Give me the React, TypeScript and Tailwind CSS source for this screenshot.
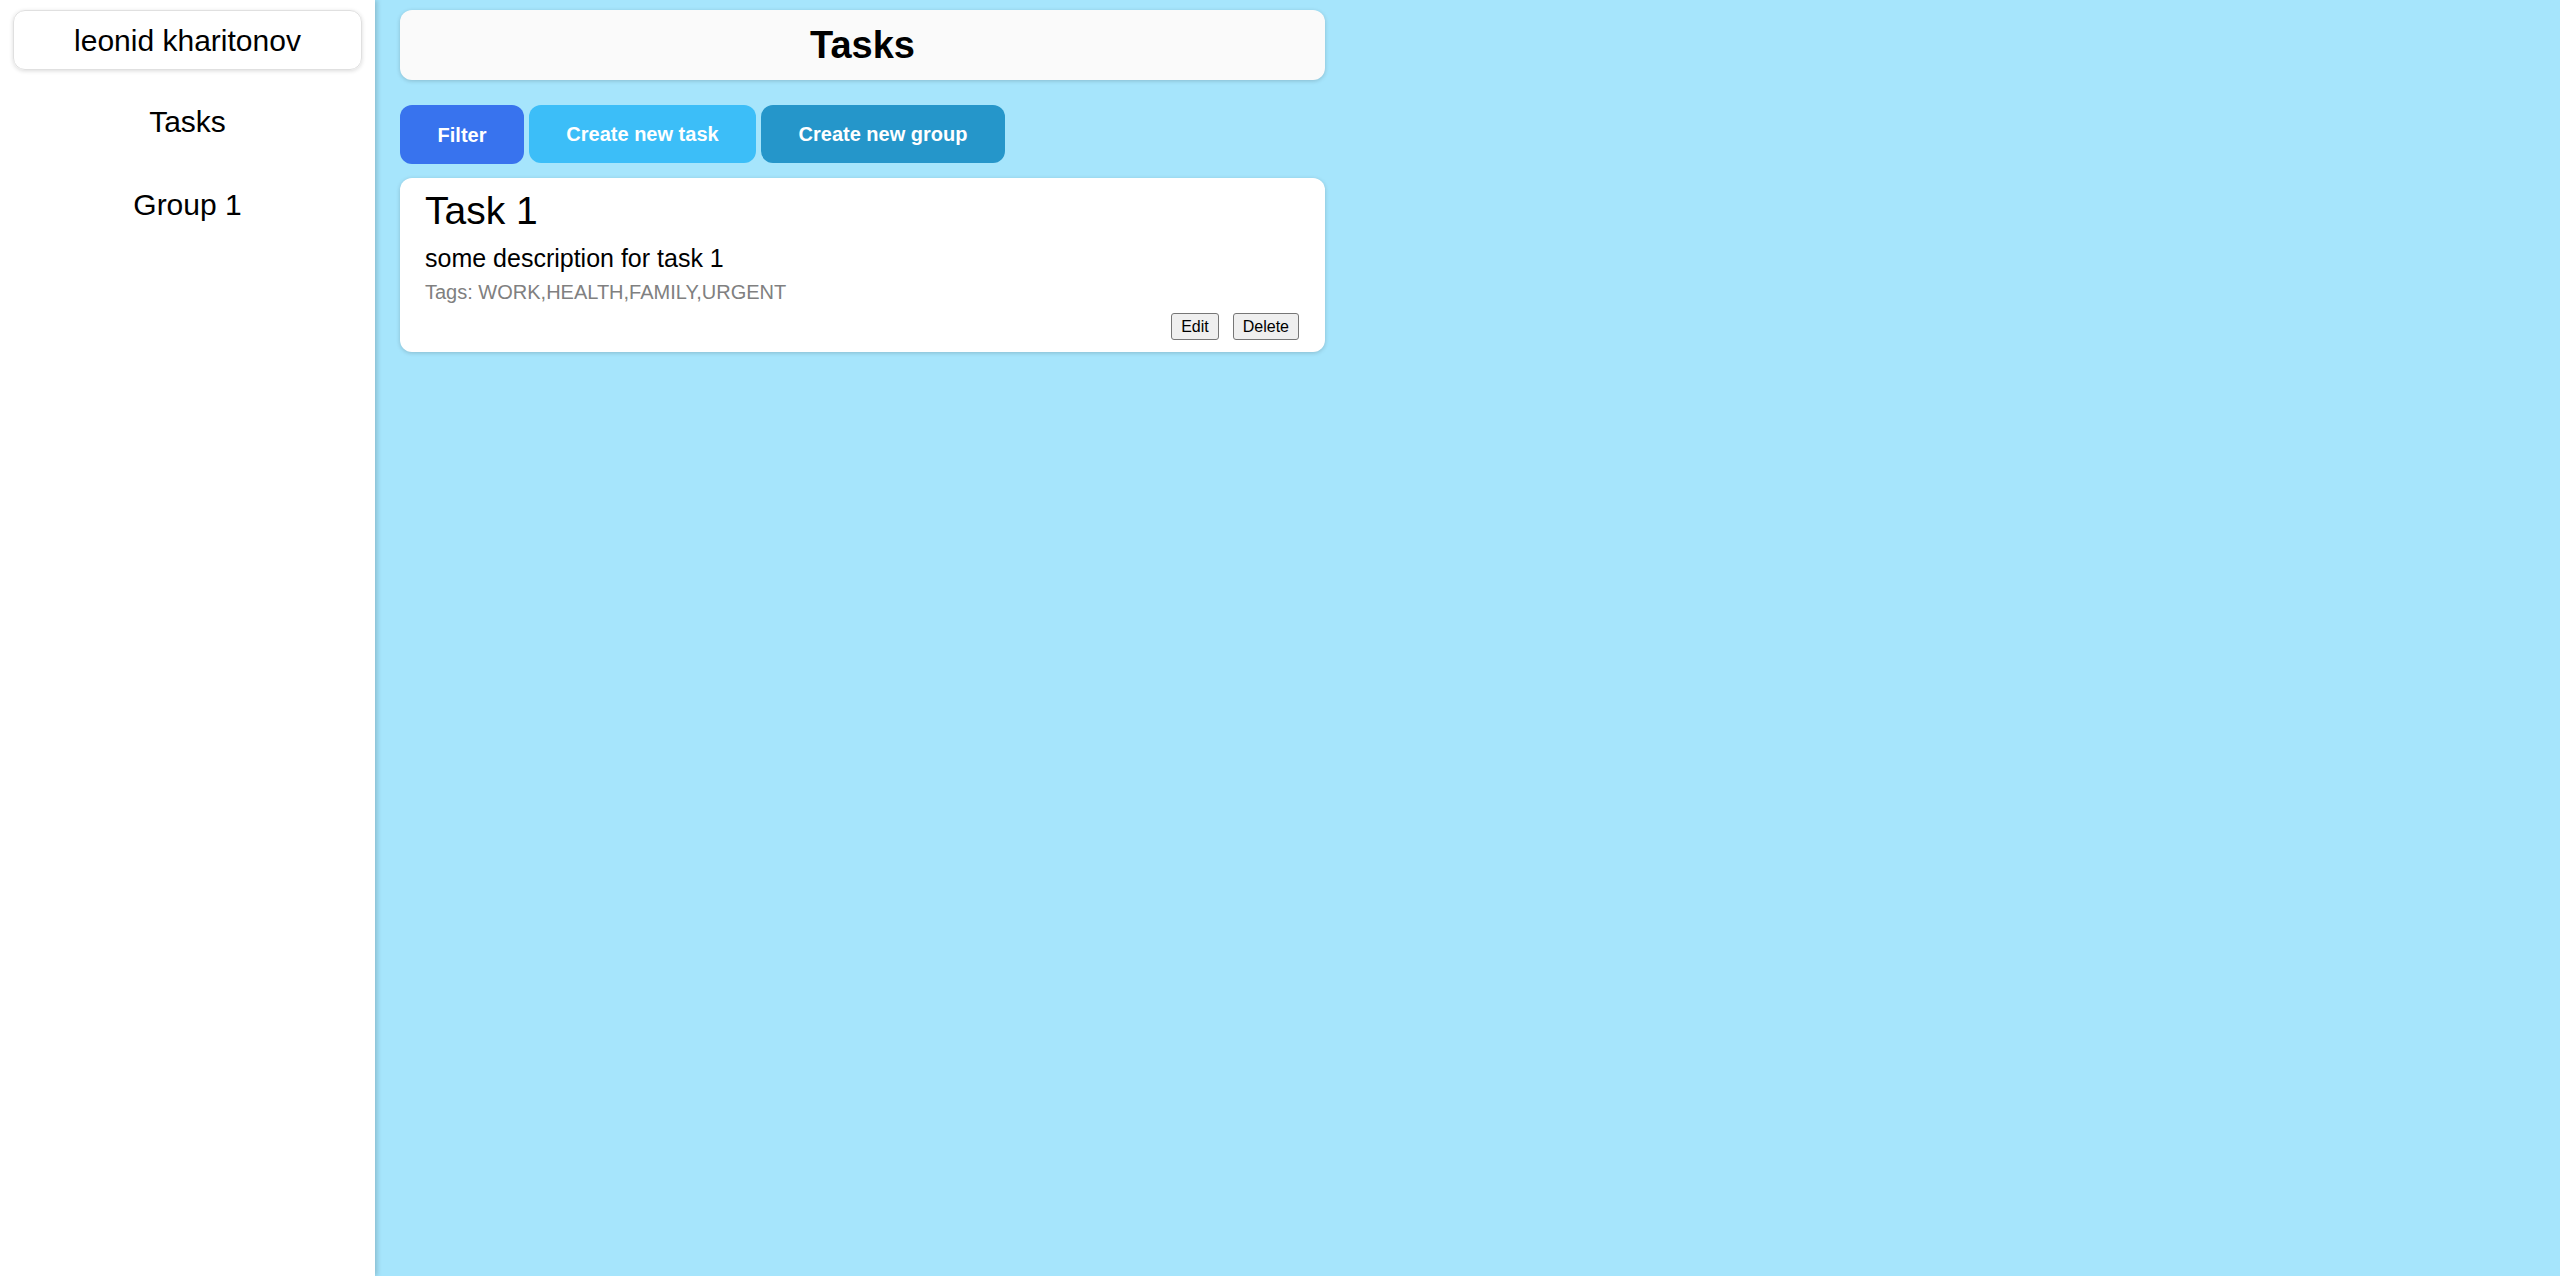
import React from 'react';

const tasks = [
  {
    id: 1,
    title: 'Task 1',
    description: 'some description for task 1',
    tags: ['WORK', 'HEALTH', 'FAMILY', 'URGENT'],
  },
];

const Sidebar: React.FC = () => (
  <aside className="w-[375px] shrink-0 bg-white h-full shadow-[2px_0_5px_rgba(0,0,0,0.18)] z-10 px-[13px] pt-[10px]">
    <div className="h-[60px] flex items-center justify-center rounded-[12px] border border-[#e0e0e0] shadow-[0_1px_4px_rgba(0,0,0,0.15)] text-[30px] text-black">
      leonid kharitonov
    </div>
    <nav className="mt-[10px] flex flex-col">
      <div className="h-[83px] flex items-center justify-center text-[30px] text-black">Tasks</div>
      <div className="h-[83px] flex items-center justify-center text-[30px] text-black">Group 1</div>
    </nav>
  </aside>
);

const App: React.FC = () => {
  return (
    <div className="flex w-full h-screen bg-[#a6e5fc] font-['Liberation_Sans',Arial,sans-serif] overflow-hidden">
      <Sidebar />
      <main className="flex-1 pl-[25px] pt-[10px]">
        <div className="w-[925px] flex flex-col">
          <div className="h-[70px] flex items-center justify-center rounded-[12px] bg-[#fafafa] shadow-[0_1px_4px_rgba(0,0,0,0.18)]">
            <h1 className="text-[38px] font-bold text-black leading-none">Tasks</h1>
          </div>

          <div className="mt-[25px] flex gap-[5px]">
            <button className="h-[59px] w-[124px] rounded-[12px] bg-[#3873ee] text-white font-bold text-[20px]">
              Filter
            </button>
            <button className="h-[58px] w-[227px] rounded-[12px] bg-[#3cbef8] text-white font-bold text-[20px]">
              Create new task
            </button>
            <button className="h-[58px] w-[244px] rounded-[12px] bg-[#2596ca] text-white font-bold text-[20px]">
              Create new group
            </button>
          </div>

          <div className="mt-[14px] flex flex-col gap-4">
            {tasks.map((t) => (
              <div
                key={t.id}
                className="rounded-[12px] bg-white shadow-[0_1px_4px_rgba(0,0,0,0.18)] px-[25px] pt-[10px] pb-[12px]"
              >
                <div className="text-[39px] leading-[45px] text-black">{t.title}</div>
                <div className="mt-[11px] text-[25px] leading-[29px] text-black">{t.description}</div>
                <div className="mt-[8px] text-[20px] leading-[23px] text-[#808080]">Tags: {t.tags.join(',')}</div>
                <div className="mt-[9px] flex justify-end gap-[14px] pr-[1px]">
                  <button className="h-[27px] px-[9px] border border-[#767676] rounded-[3px] bg-[#efefef] text-[16px] text-black leading-none">
                    Edit
                  </button>
                  <button className="h-[27px] px-[9px] border border-[#767676] rounded-[3px] bg-[#efefef] text-[16px] text-black leading-none">
                    Delete
                  </button>
                </div>
              </div>
            ))}
          </div>
        </div>
      </main>
    </div>
  );
};

export default App;
